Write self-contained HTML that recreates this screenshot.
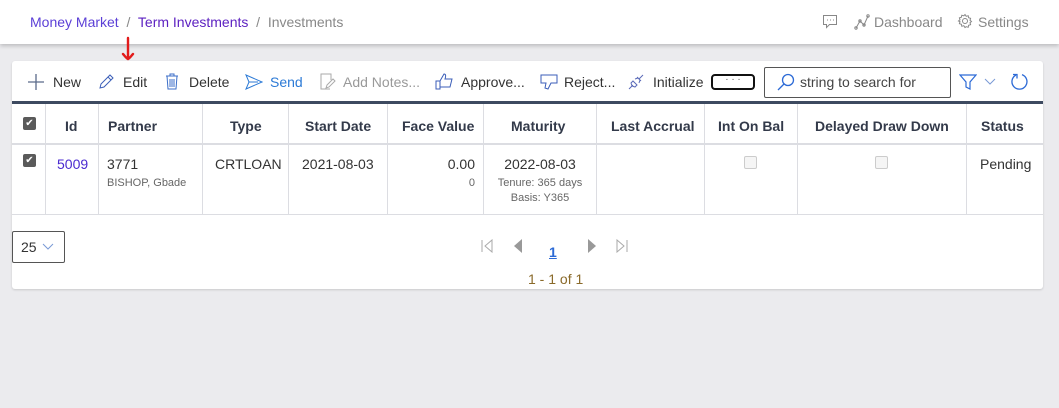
<!DOCTYPE html>
<html><head><style>
*{box-sizing:border-box;margin:0;padding:0}
body{width:1059px;height:408px;background:#ebebee;font-family:"Liberation Sans",sans-serif;position:relative;overflow:hidden;color:#333}
.hdr{position:absolute;left:0;top:0;width:1059px;height:44px;background:#fff;box-shadow:0 2px 4px rgba(0,0,0,.2)}
.abs{position:absolute;white-space:nowrap}
.card{position:absolute;left:12px;top:61px;width:1031px;height:228px;background:#fff;border-radius:3px;box-shadow:0 1px 2px rgba(0,0,0,.15)}
.tb{font-size:14px;top:74px;color:#333}
.bar{position:absolute;left:12px;top:101px;width:1031px;height:3px;background:#3d4a60}
.vl{position:absolute;top:104px;height:110px;width:1px;background:#dcdde2}
.hl{position:absolute;left:12px;width:1031px;height:1px;background:#dcdde2}
.th{position:absolute;top:118px;font-size:14px;font-weight:bold;color:#333a4a;white-space:nowrap}
.td{position:absolute;top:156px;font-size:14px;white-space:nowrap;color:#333}
.sm{font-size:11px;color:#666;margin-top:5px}
.cb{position:absolute;width:13px;height:13px;border-radius:2px}
</style></head><body>
<div class="hdr"></div>
<div class="abs" style="left:30px;top:14px;font-size:14px"><span style="color:#5b3fd6">Money Market</span> <span style="color:#888">&nbsp;/&nbsp;</span> <span style="color:#5b1fc0">Term Investments</span> <span style="color:#888">&nbsp;/&nbsp;</span> <span style="color:#888">Investments</span></div>
<svg class="abs" style="left:822px;top:14px" width="16" height="16" viewBox="0 0 16 16" fill="none" stroke="#888"><path d="M1.5 1.5h13v9h-7l-3 3v-3h-3z"/><path d="M5 6h1M8 6h1M11 6h1"/></svg>
<svg class="abs" style="left:854px;top:14px" width="16" height="16" viewBox="0 0 16 16" fill="none" stroke="#888"><path d="M2 14l4-7 4 4 4-9"/><circle cx="2" cy="14" r="1.2"/><circle cx="6" cy="7" r="1.2"/><circle cx="10" cy="11" r="1.2"/><circle cx="14" cy="2" r="1.2"/></svg>
<div class="abs" style="left:874px;top:14px;font-size:14px;color:#888">Dashboard</div>
<svg class="abs" style="left:957px;top:13px" width="16" height="16" viewBox="0 0 16 16" fill="none" stroke="#888"><circle cx="8" cy="8" r="2.5"/><path d="M8 1.5l1.2 1.8 2-.6.4 2 2 .6-.6 2 1.5 1.2-1.5 1.2.6 2-2 .6-.4 2-2-.6L8 14.5l-1.2-1.8-2 .6-.4-2-2-.6.6-2L1.5 8 3 6.8l-.6-2 2-.6.4-2 2 .6z"/></svg>
<div class="abs" style="left:978px;top:14px;font-size:14px;color:#888">Settings</div>

<div class="card"></div>
<svg class="abs" style="left:120px;top:36px" width="16" height="28" viewBox="0 0 16 28" fill="none" stroke="#e21b1b" stroke-width="2.4" stroke-linecap="round"><path d="M8 2v20M3 18c2 2 3 4 5 5 2-1 3-3 5-5"/></svg>

<svg class="abs" style="left:28px;top:74px" width="16" height="16" viewBox="0 0 16 16" stroke="#5a6a8a" stroke-width="1.3"><path d="M8 0v16M0 8h16"/></svg>
<div class="abs tb" style="left:53px">New</div>
<svg class="abs" style="left:98px;top:73px" width="17" height="17" viewBox="0 0 17 17" fill="none" stroke="#3b5eb8"><path d="M2 15l1-4L12 2l3 3-9 9z M10 4l3 3"/></svg>
<div class="abs tb" style="left:123px">Edit</div>
<svg class="abs" style="left:164px;top:73px" width="16" height="17" viewBox="0 0 16 17" fill="none" stroke="#3b6ec8"><path d="M2 3h12M6 3V1h4v2M3 3l1 13h8l1-13M6 6v8M8 6v8M10 6v8"/></svg>
<div class="abs tb" style="left:189px">Delete</div>
<svg class="abs" style="left:245px;top:74px" width="18" height="16" viewBox="0 0 18 16" fill="none" stroke="#2c7ad6"><path d="M1 1l16 7-16 7 3-7zM4 8h9"/></svg>
<div class="abs tb" style="left:270px;color:#2c7ad6">Send</div>
<svg class="abs" style="left:319px;top:73px" width="17" height="17" viewBox="0 0 17 17" fill="none" stroke="#aaa"><path d="M11 16H2V1h10v6M7 15l1-3 6-6 2 2-6 6z"/></svg>
<div class="abs tb" style="left:343px;color:#999">Add Notes...</div>
<svg class="abs" style="left:435px;top:73px" width="19" height="17" viewBox="0 0 19 17" fill="none" stroke="#3b5eb8"><path d="M1 8h4v8H1zM5 8l4-7c2 0 2 2 1 5h7l-1 4-1 4H5"/></svg>
<div class="abs tb" style="left:461px">Approve...</div>
<svg class="abs" style="left:539px;top:74px" width="19" height="17" viewBox="0 0 19 17" fill="none" stroke="#3b5eb8"><path d="M18 1H2v8h5l-1 5 3 1 3-6h6z"/></svg>
<div class="abs tb" style="left:564px">Reject...</div>
<svg class="abs" style="left:628px;top:74px" width="16" height="16" viewBox="0 0 16 16" fill="none" stroke="#5a6ab8"><path d="M1 15l4-4M15 1l-4 4M5 7l4 4-2 2-3-1-1-3zM9 3l4 4M7 5l3-1 2 2-1 3"/></svg>
<div class="abs tb" style="left:653px">Initialize</div>
<div class="abs" style="left:711px;top:74px;width:44px;height:16px;border:2px solid #111;border-radius:4px;font-size:10px;text-align:center;line-height:7px;color:#555">&middot; &middot; &middot;</div>
<div class="abs" style="left:764px;top:67px;width:187px;height:31px;border:1px solid #555;border-radius:2px"></div>
<svg class="abs" style="left:777px;top:73px" width="18" height="18" viewBox="0 0 18 18" fill="none" stroke="#2c6ad6" stroke-width="1.3"><circle cx="11" cy="7" r="5.5"/><path d="M7 11L1 17"/></svg>
<div class="abs tb" style="left:800px;top:74px;color:#444">string to search for</div>
<svg class="abs" style="left:959px;top:73px" width="18" height="18" viewBox="0 0 18 18" fill="none" stroke="#2c6ad6" stroke-width="1.2"><path d="M1 2h16l-6 7v7l-4-2V9z"/></svg>
<svg class="abs" style="left:984px;top:78px" width="12" height="8" viewBox="0 0 12 8" fill="none" stroke="#7a9ad6"><path d="M1 1l5 5 5-5"/></svg>
<svg class="abs" style="left:1010px;top:72px" width="19" height="19" viewBox="0 0 19 19" fill="none" stroke="#2c6ad6" stroke-width="1.3"><path d="M6 3A7.5 7.5 0 1 0 12 2.6"/><path d="M3 2.5h4v4"/></svg>

<div class="bar"></div>
<div class="hl" style="top:143px;height:2px"></div>
<div class="hl" style="top:214px"></div>
<div class="vl" style="left:45px"></div><div class="vl" style="left:98px"></div><div class="vl" style="left:202px"></div><div class="vl" style="left:288px"></div><div class="vl" style="left:387px"></div><div class="vl" style="left:483px"></div><div class="vl" style="left:596px"></div><div class="vl" style="left:704px"></div><div class="vl" style="left:797px"></div><div class="vl" style="left:966px"></div>

<div class="cb" style="left:23px;top:117px;background:#5a5a5a;color:#fff;font-size:10px;text-align:center;line-height:13px">✔</div>
<div class="th" style="left:65px">Id</div>
<div class="th" style="left:108px">Partner</div>
<div class="th" style="left:230px">Type</div>
<div class="th" style="left:305px">Start Date</div>
<div class="th" style="left:402px">Face Value</div>
<div class="th" style="left:511px">Maturity</div>
<div class="th" style="left:611px">Last Accrual</div>
<div class="th" style="left:718px">Int On Bal</div>
<div class="th" style="left:815px">Delayed Draw Down</div>
<div class="th" style="left:981px">Status</div>

<div class="cb" style="left:23px;top:154px;background:#5a5a5a;color:#fff;font-size:10px;text-align:center;line-height:13px">✔</div>
<div class="td" style="left:57px;color:#4a2ad0">5009</div>
<div class="td" style="left:107px">3771<div class="sm">BISHOP, Gbade</div></div>
<div class="td" style="left:215px">CRTLOAN</div>
<div class="td" style="left:302px">2021-08-03</div>
<div class="td" style="left:400px;width:75px;text-align:right">0.00<div class="sm">0</div></div>
<div class="td" style="left:484px;width:112px;text-align:center">2022-08-03<div class="sm">Tenure: 365 days</div><div class="sm" style="margin-top:3px">Basis: Y365</div></div>
<div class="cb" style="left:744px;top:156px;border:1px solid #ccc;background:#f5f5f5"></div>
<div class="cb" style="left:875px;top:156px;border:1px solid #ccc;background:#f5f5f5"></div>
<div class="td" style="left:980px">Pending</div>

<div class="abs" style="left:12px;top:231px;width:53px;height:32px;border:1px solid #555;border-radius:2px;font-size:14px;padding:7px 0 0 8px;color:#333">25</div>
<svg class="abs" style="left:42px;top:243px" width="12" height="8" viewBox="0 0 12 8" fill="none" stroke="#7a9ad6"><path d="M1 1l5 5 5-5"/></svg>
<svg class="abs" style="left:480px;top:239px" width="14" height="14" viewBox="0 0 14 14" fill="none" stroke="#aaa"><path d="M2 1v12M12 1L5 7l7 6z"/></svg>
<svg class="abs" style="left:512px;top:238px" width="12" height="16" viewBox="0 0 12 16"><path d="M10 1L2 8l8 7z" fill="#999"/></svg>
<div class="abs" style="left:549px;top:244px;font-size:14px;font-weight:bold;color:#2c6ad6;text-decoration:underline">1</div>
<svg class="abs" style="left:586px;top:238px" width="12" height="16" viewBox="0 0 12 16"><path d="M2 1l8 7-8 7z" fill="#999"/></svg>
<svg class="abs" style="left:615px;top:239px" width="14" height="14" viewBox="0 0 14 14" fill="none" stroke="#aaa"><path d="M12 1v12M2 1l7 6-7 6z"/></svg>
<div class="abs" style="left:528px;top:271px;font-size:14px;color:#8a6a2a">1 - 1 of 1</div>
</body></html>
